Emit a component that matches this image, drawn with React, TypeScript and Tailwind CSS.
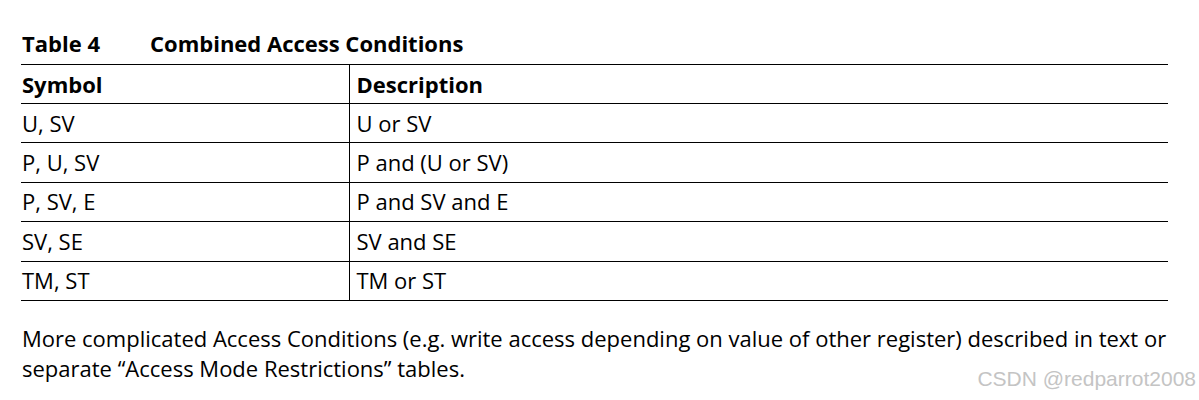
const rows = [
  ['U, SV', 'U or SV'],
  ['P, U, SV', 'P and (U or SV)'],
  ['P, SV, E', 'P and SV and E'],
  ['SV, SE', 'SV and SE'],
  ['TM, ST', 'TM or ST'],
];

export default function App() {
  return (
    <div className="relative w-[1199px] h-[400px] bg-white text-black font-['Open_Sans',sans-serif] overflow-hidden">
      <div className="pl-[22px] pt-[28px]">
        <div className="flex text-[22px] font-bold leading-[30px]">
          <span className="w-[128px]">Table 4</span>
          <span>Combined Access Conditions</span>
        </div>
      </div>
      <table className="ml-[21px] mt-[6px] w-[1147px] border-collapse text-[22px]">
        <thead>
          <tr className="border-t border-b border-black h-[39px]">
            <th className="w-[328px] text-left font-bold pl-px border-r border-black">Symbol</th>
            <th className="text-left font-bold pl-[7px]">Description</th>
          </tr>
        </thead>
        <tbody>
          {rows.map(([sym, desc]) => (
            <tr key={sym} className="border-b border-black h-[39.4px]">
              <td className="pl-px border-r border-black">{sym}</td>
              <td className="pl-[7px]">{desc}</td>
            </tr>
          ))}
        </tbody>
      </table>
      <p className="ml-[22px] mt-[22px] w-[1176px] text-[22px] leading-[30px] whitespace-nowrap">
        More complicated Access Conditions (e.g. write access depending on value of other register) described in text or
        <br />
        separate “Access Mode Restrictions” tables.
      </p>
      <div className="absolute right-[3px] bottom-[6px] text-[21px] text-[#c4c4c4] font-['Liberation_Sans',sans-serif]">
        CSDN @redparrot2008
      </div>
    </div>
  );
}
